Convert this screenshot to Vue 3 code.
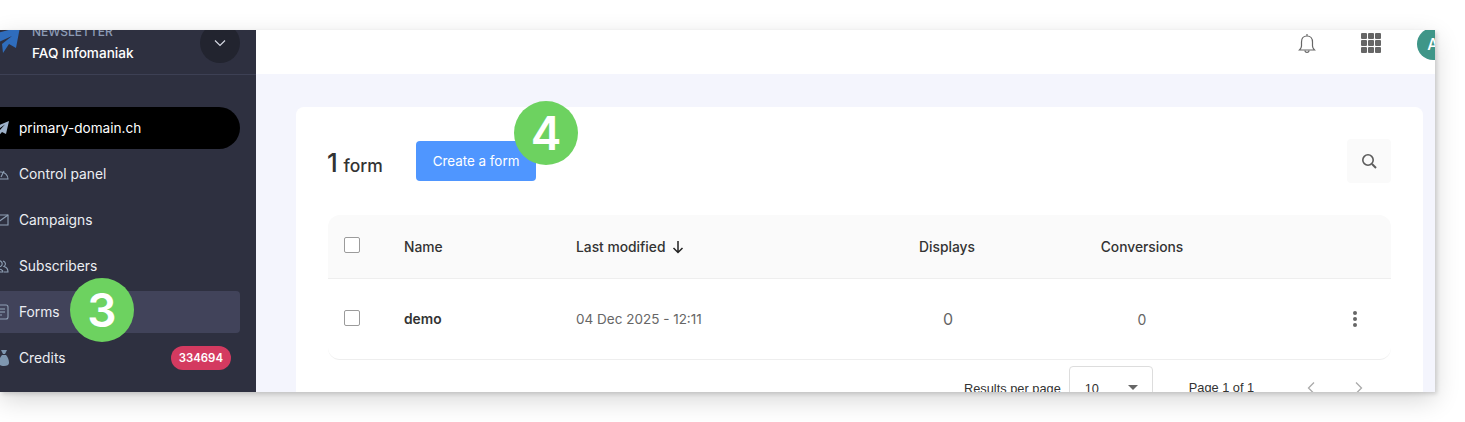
<template>
  <div class="page">
    <div class="window">
      <aside class="sidebar">
        <div class="product">
          <svg class="product_logo" viewBox="-14 26 34 34" width="34" height="34">
            <path d="M20 27 L16 48 L9 44 L3 53 L2 44 L12 36 L-1 42 L-14 36 Z" fill="#2f6dbd" />
          </svg>
          <div class="product_text">
            <div class="product_kind">NEWSLETTER</div>
            <div class="product_name">FAQ Infomaniak</div>
          </div>
          <div class="product_toggle">
            <svg viewBox="0 0 12 8" width="12" height="8">
              <path d="M1 1.5 L6 6.5 L11 1.5" fill="none" stroke="#d5d8e2" stroke-width="1.2" />
            </svg>
          </div>
        </div>
        <nav class="menu">
          <div class="domain">
            <svg viewBox="0 0 16 16" width="16" height="16">
              <path d="M16 1 L0 7.5 L4 10 L12 4.5 L6 11 L6 15.5 L9 12 L13 14 Z" fill="#9db1c9" />
            </svg>
            <span>primary-domain.ch</span>
          </div>
          <div
            v-for="item in menu_items"
            :key="item.label"
            class="menu_item"
            :class="{ active: item.active }"
          >
            <svg viewBox="0 0 16 16" width="16" height="16" fill="none" stroke="#8fa0b5" stroke-width="1.1">
              <path v-for="d in item.icon" :key="d" :d="d" />
              <path v-if="item.filled" :d="item.filled" fill="#7f97b0" stroke="none" />
            </svg>
            <span>{{ item.label }}</span>
            <span v-if="item.badge" class="badge">{{ item.badge }}</span>
          </div>
        </nav>
        <div class="step step_three">3</div>
      </aside>
      <main class="main">
        <header class="topbar">
          <svg class="bell" viewBox="0 0 20 22" width="20" height="22" fill="none" stroke="#666" stroke-width="1.2">
            <path d="M10 1 V3 M10 3 C6 3 4.5 6 4.5 9 V13 C4.5 15 3.5 16 2.5 17 H17.500 C16.500 16 15.500 15 15.500 13 V9 C15.500 6 14 3 10 3 Z" />
            <path d="M8 17.500 C8 20 12 20 12 17.500" />
          </svg>
          <div class="apps">
            <i v-for="n in 9" :key="n"></i>
          </div>
          <div class="avatar">A</div>
        </header>
        <section class="content">
          <div class="card">
            <div class="card_head">
              <div class="count"><b>1</b> form</div>
              <button class="create">Create a form</button>
              <div class="search">
                <svg viewBox="0 0 16 16" width="16" height="16" fill="none" stroke="#5c5c5c" stroke-width="1.6">
                  <circle cx="7" cy="7" r="5.200" />
                  <path d="M11 11 L15 15" stroke-width="2" />
                </svg>
              </div>
              <div class="step step_four">4</div>
            </div>
            <div class="table">
              <div class="row row_head">
                <div class="check"></div>
                <div>Name</div>
                <div class="sorted">
                  Last modified
                  <svg viewBox="0 0 12 14" width="12" height="14" fill="none" stroke="#222" stroke-width="1.500">
                    <path d="M6 1 V12.500 M1.500 8 L6 12.500 L10.500 8" />
                  </svg>
                </div>
                <div class="center">Displays</div>
                <div class="center">Conversions</div>
                <div></div>
              </div>
              <div class="row row_body" v-for="form in forms" :key="form.name">
                <div class="check"></div>
                <div class="form_name">{{ form.name }}</div>
                <div class="form_date">{{ form.modified }}</div>
                <div class="center number big">{{ form.displays }}</div>
                <div class="center number">{{ form.conversions }}</div>
                <div class="dots"><i></i><i></i><i></i></div>
              </div>
            </div>
            <div class="pager">
              <span>Results per page</span>
              <div class="per_page">
                <span>10</span>
                <i class="caret"></i>
              </div>
              <span class="page_of">Page 1 of 1</span>
              <svg viewBox="0 0 10 14" width="10" height="14" fill="none" stroke="#aaa" stroke-width="1.300">
                <path d="M8 1.500 L2.500 7 L8 12.500" />
              </svg>
              <svg class="next" viewBox="0 0 10 14" width="10" height="14" fill="none" stroke="#aaa" stroke-width="1.300">
                <path d="M2 1.500 L7.500 7 L2 12.500" />
              </svg>
            </div>
          </div>
        </section>
      </main>
    </div>
  </div>
</template>

<script setup>
const menu_items = [
  {
    label: "Control panel",
    icon: ["M1 13 A7 7 0 1 1 15 13 Z", "M8 11 L11 5", "M3 9 H5"],
  },
  {
    label: "Campaigns",
    icon: ["M1 3 H15 V13 H1 Z", "M1 13 L15 3"],
  },
  {
    label: "Subscribers",
    icon: [
      "M5 3 A3 3 0 1 1 5 8.500 A3 3 0 1 1 5 3 Z",
      "M0 14 C0 10 10 10 10 14 Z",
      "M10 3 A3 3 0 0 1 11 8.500 C13 9 15 11 15 14 H11",
    ],
  },
  {
    label: "Forms",
    active: true,
    icon: ["M3 1 H13 Q15 1 15 3 V13 Q15 15 13 15 H3 Q1 15 1 13 V3 Q1 1 3 1 Z", "M4 5 H12", "M4 8 H12", "M4 11 H9"],
  },
  {
    label: "Credits",
    badge: "334694",
    icon: [],
    filled: "M8 0 H14 L12 4 H10 Z M9 5 H13 C15 7 16 10 16 13 C16 15 14 16 11 16 C8 16 6 15 6 13 C6 10 7 7 9 5 Z",
  },
];

const forms = [
  {
    name: "demo",
    modified: "04 Dec 2025 - 12:11",
    displays: 0,
    conversions: 0,
  },
];
</script>

<style>
html,
body {
  margin: 0;
  background: #fff;
  overflow: hidden;
}
</style>

<style scoped>
.page {
  width: 1465px;
  height: 422px;
  padding-top: 30px;
  box-sizing: border-box;
  font-family: Inter, "Liberation Sans", sans-serif;
  color: #333;
}
.window {
  position: relative;
  display: flex;
  width: 1435px;
  height: 362px;
  overflow: hidden;
  box-shadow: 0 8px 24px rgba(0, 0, 0, 0.16), 2px 2px 4px rgba(0, 0, 0, 0.14);
}
.sidebar {
  position: relative;
  width: 256px;
  flex-shrink: 0;
  background: #2e3040;
  color: #fff;
}
.product {
  display: flex;
  align-items: center;
  height: 68px;
  margin-top: -24px;
  padding: 0 16px 0 0;
  box-sizing: content-box;
  border-bottom: 1px solid #3d4054;
}
.product_logo {
  flex-shrink: 0;
  margin-left: -14px;
  margin-right: 12px;
  margin-top: 6px;
}
.product_text {
  flex: 1;
  padding-top: 8px;
}
.product_kind {
  font-size: 12px;
  line-height: 14px;
  color: #8c9bb5;
  font-weight: 500;
}
.product_name {
  font-size: 13.600px;
  line-height: 20px;
  margin-top: 4px;
  font-weight: 500;
}
.product_toggle {
  display: flex;
  align-items: center;
  justify-content: center;
  width: 40px;
  height: 40px;
  margin-top: 6px;
  border-radius: 50%;
  background: #22242f;
}
.menu {
  display: flex;
  flex-direction: column;
  gap: 4px;
  padding-top: 32px;
}
.domain,
.menu_item {
  display: flex;
  align-items: center;
  gap: 10px;
  width: 250px;
  height: 42px;
  margin-left: -10px;
  padding: 0 0 1px 3px;
  box-sizing: border-box;
  font-size: 13.800px;
}
.domain {
  background: #000;
  border-radius: 0 21px 21px 0;
  font-size: 13.600px;
}
.menu_item {
  color: #eceef3;
  border-radius: 0 4px 4px 0;
}
.menu_item.active {
  background: #41435a;
}
.badge {
  margin-left: auto;
  margin-right: 9px;
  padding: 0 8px;
  height: 24px;
  line-height: 24px;
  border-radius: 12px;
  background: #d43a60;
  color: #fff;
  font-size: 11.400px;
  font-weight: 600;
}
.step {
  position: absolute;
  z-index: 2;
  width: 64px;
  height: 64px;
  border-radius: 50%;
  background: #6dd260;
  color: #fff;
  font-size: 46px;
  font-weight: 600;
  line-height: 64px;
  text-align: center;
}
.step_three {
  left: 70px;
  top: 248px;
}
.step_four {
  left: 186px;
  top: -38px;
}
.main {
  flex: 1;
  display: flex;
  flex-direction: column;
  min-width: 0;
}
.topbar {
  display: flex;
  align-items: flex-start;
  height: 44px;
  flex-shrink: 0;
  background: #fff;
}
.bell {
  flex-shrink: 0;
  margin-left: 1041px;
  margin-top: 3px;
}
.apps {
  display: grid;
  grid-template-columns: repeat(3, 5.600px);
  grid-auto-rows: 5.600px;
  gap: 1.600px;
  flex-shrink: 0;
  margin-left: 44px;
  margin-top: 3px;
}
.apps i {
  background: #666;
  border-radius: 1px;
}
.avatar {
  width: 32px;
  height: 32px;
  flex-shrink: 0;
  margin-left: 36px;
  margin-top: -2px;
  border-radius: 50%;
  background: #3f9688;
  color: #fff;
  font-size: 16px;
  line-height: 32px;
  text-align: center;
  font-weight: 500;
}
.content {
  flex: 1;
  padding: 33px 12px 0 40px;
  background: #f4f5fd;
  min-height: 0;
}
.card {
  background: #fff;
  border-radius: 8px 8px 0 0;
  padding: 32px 32px 0 32px;
  height: 300px;
  box-sizing: border-box;
}
.card_head {
  position: relative;
  display: flex;
  align-items: center;
  height: 44px;
  margin-bottom: 32px;
}
.count {
  width: 89px;
  font-size: 17.500px;
  font-weight: 500;
  color: #333;
  margin-left: -1px;
  margin-top: 2px;
  word-spacing: 1px;
}
.count b {
  font-size: 26px;
  font-weight: 500;
}
.create {
  width: 120px;
  height: 40px;
  border: none;
  border-radius: 4px;
  background: #4f96ff;
  color: #fff;
  font-family: inherit;
  font-size: 13.400px;
}
.search {
  display: flex;
  align-items: center;
  justify-content: center;
  width: 44px;
  height: 44px;
  margin-left: auto;
  border-radius: 4px;
  background: #fafafa;
}
.table {
  border-bottom: 1px solid #eee;
  border-radius: 12px;
}
.row {
  display: grid;
  grid-template-columns: 60px 172px 272px 198px 192px 1fr;
  align-items: center;
  padding-left: 16px;
}
.row_head {
  height: 63px;
  border-radius: 12px 12px 0 0;
  border-bottom: 1px solid #eee;
  background: #fafafa;
  font-size: 13.800px;
  font-weight: 500;
  color: #333;
}
.row_body {
  height: 80px;
  font-size: 14px;
}
.check {
  width: 16px;
  height: 16px;
  box-sizing: border-box;
  border: 1px solid #9b9b9b;
  border-radius: 2px;
  background: #fff;
  margin-top: -4px;
}
.row_body .check {
  margin-top: -2px;
}
.sorted {
  display: flex;
  align-items: center;
  gap: 7px;
}
.center {
  text-align: center;
}
.form_name {
  font-weight: 600;
  font-size: 13.800px;
}
.form_date {
  color: #666;
  font-size: 13.500px;
}
.number {
  color: #666;
  font-size: 14px;
}
.number.big {
  font-size: 16px;
  padding-left: 2px;
}
.dots {
  display: flex;
  flex-direction: column;
  align-items: center;
  gap: 2px;
  width: 4px;
  margin-left: 115px;
}
.dots i {
  width: 4px;
  height: 4px;
  border-radius: 50%;
  background: #666;
}
.pager {
  display: flex;
  align-items: flex-start;
  padding-top: 6px;
  padding-left: 636px;
  font-family: "Liberation Sans", sans-serif;
  font-size: 12.800px;
  color: #333;
}
.pager > span:first-child {
  margin-top: 15px;
}
.per_page {
  display: flex;
  justify-content: space-between;
  flex-shrink: 0;
  width: 84px;
  height: 44px;
  margin-left: 8px;
  padding: 14px 14px 0 15px;
  box-sizing: border-box;
  border: 1px solid #ddd;
  border-radius: 4px;
}
.caret {
  width: 0;
  height: 0;
  margin-top: 4px;
  border: 5.500px solid transparent;
  border-top: 5.500px solid #666;
  border-bottom: none;
}
.page_of {
  margin-left: 36px;
  margin-top: 14px;
  margin-right: 52px;
}
.pager svg {
  flex-shrink: 0;
  margin-top: 15px;
}
.next {
  margin-left: 38px;
}
</style>
